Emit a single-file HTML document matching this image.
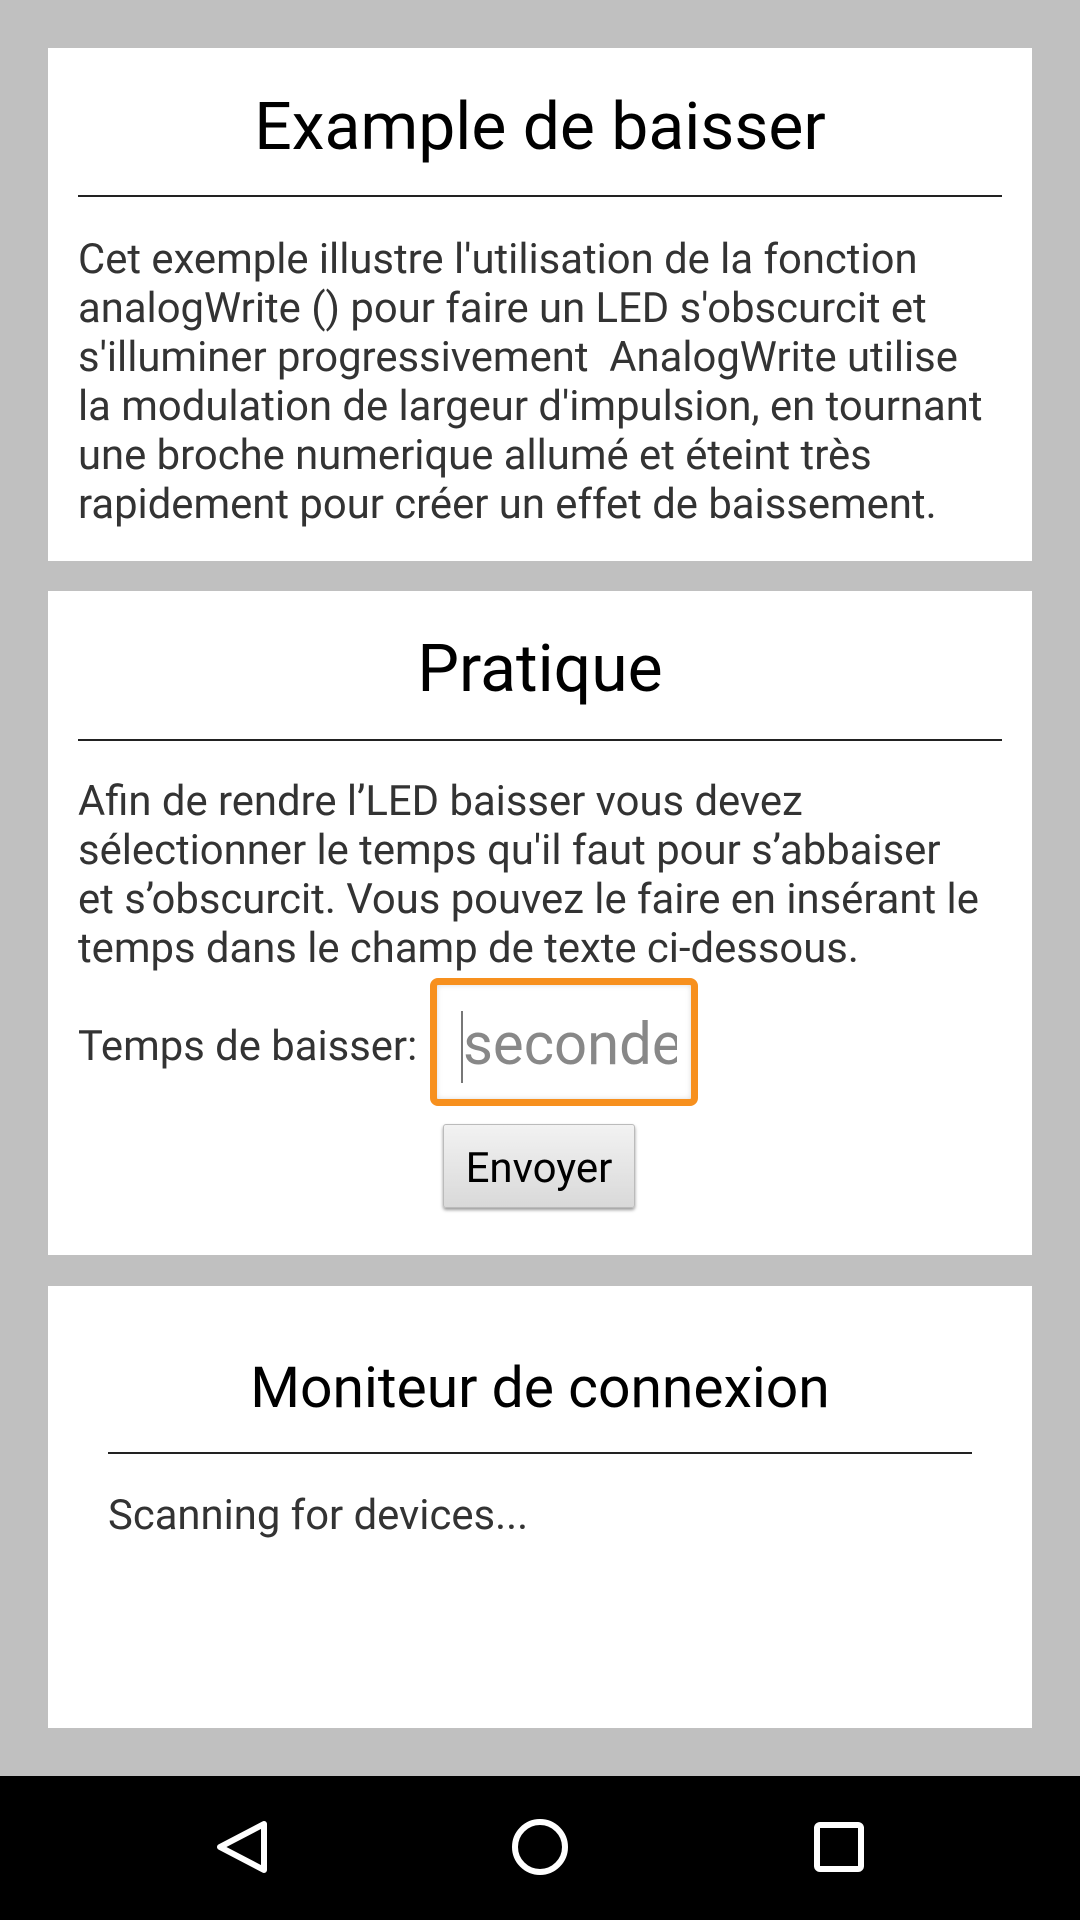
<!DOCTYPE html>
<html><head><meta charset="utf-8"><style>
html,body{margin:0;padding:0;}
body{width:1080px;height:1920px;background:#c0c0c0;position:relative;overflow:hidden;font-family:"Roboto","Liberation Sans",sans-serif;}
.card{position:absolute;left:48px;width:984px;background:#fff;}
.t{position:absolute;left:0;width:100%;text-align:center;color:#000;font-size:66px;line-height:76px;}
.hr{position:absolute;height:2px;background:#222;}
.p{position:absolute;left:30px;color:#333;font-size:41.8px;line-height:49px;white-space:nowrap;}
</style></head><body>
<div class="card" style="top:48px;height:513px;">
 <div class="t" style="top:42px;">Example de baisser</div>
 <div class="hr" style="left:30px;width:924px;top:147px;"></div>
 <div class="p" style="top:187px;">Cet exemple illustre l'utilisation de la fonction<br>analogWrite () pour faire un LED s'obscurcit et<br>s'illuminer progressivement&nbsp; AnalogWrite utilise<br>la modulation de largeur d'impulsion, en tournant<br>une broche numerique allumé et éteint très<br>rapidement pour créer un effet de baissement.</div>
</div>
<div class="card" style="top:591px;height:664px;">
 <div class="t" style="top:41px;">Pratique</div>
 <div class="hr" style="left:30px;width:924px;top:148px;"></div>
 <div class="p" style="top:186px;">Afin de rendre l’LED baisser vous devez<br>sélectionner le temps qu'il faut pour s’abbaiser<br>et s’obscurcit. Vous pouvez le faire en insérant le<br>temps dans le champ de texte ci-dessous.</div>
 <div class="p" style="top:431px;">Temps de baisser:</div>
 <div style="position:absolute;left:382px;top:387px;width:268px;height:128px;border:7px solid #f7901e;border-radius:8px;box-sizing:border-box;background:#fff;box-shadow:inset 0 0 6px #ddd;overflow:hidden;">
  <div style="position:absolute;left:24px;top:26px;width:2px;height:72px;background:#777;"></div>
  <div style="position:absolute;left:26px;top:22px;width:214px;overflow:hidden;color:#888;font-size:58px;line-height:76px;white-space:nowrap;">secondes</div>
 </div>
 <div style="position:absolute;left:395px;top:533px;width:192px;height:84px;box-sizing:border-box;border:1px solid #bbb;border-radius:3px;background:linear-gradient(#f2f2f2,#d9d9d9);box-shadow:0 2px 3px #999;text-align:center;font-size:42px;line-height:88px;color:#000;">Envoyer</div>
</div>
<div class="card" style="top:1286px;height:442px;">
 <div class="t" style="top:64px;font-size:57px;">Moniteur de connexion</div>
 <div class="hr" style="left:60px;width:864px;top:166px;"></div>
 <div class="p" style="left:60px;top:205px;">Scanning for devices...</div>
</div>
<div style="position:absolute;left:0;top:1776px;width:1080px;height:144px;background:#000;">
 <svg width="1080" height="144" style="position:absolute;left:0;top:0">
  <path d="M264 48 L264 94 L220 71 Z" fill="none" stroke="#fff" stroke-width="6" stroke-linejoin="round"/>
  <circle cx="540" cy="71" r="25" fill="none" stroke="#fff" stroke-width="6"/>
  <rect x="817" y="49" width="44" height="44" rx="3" fill="none" stroke="#fff" stroke-width="6"/>
 </svg>
</div>
</body></html>
